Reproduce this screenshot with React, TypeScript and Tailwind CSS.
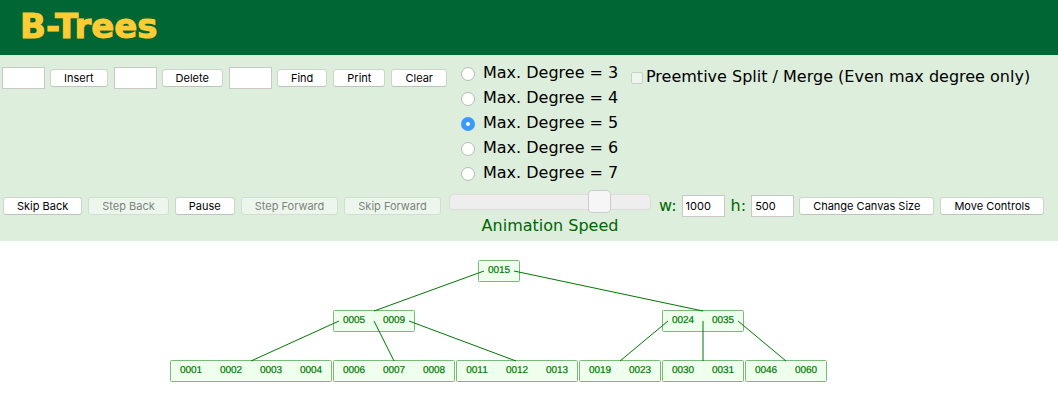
import { useState, type ButtonHTMLAttributes } from "react";

type TreeNode = { x: number; y: number; keys: string[] };
type Edge = [number, number, number, number];

const nodes: TreeNode[] = [
  { x: 478, y: 260, keys: ["0015"] },
  { x: 333, y: 310, keys: ["0005", "0009"] },
  { x: 662, y: 310, keys: ["0024", "0035"] },
  { x: 170, y: 360, keys: ["0001", "0002", "0003", "0004"] },
  { x: 333, y: 360, keys: ["0006", "0007", "0008"] },
  { x: 456, y: 360, keys: ["0011", "0012", "0013"] },
  { x: 579, y: 360, keys: ["0019", "0023"] },
  { x: 662, y: 360, keys: ["0030", "0031"] },
  { x: 745, y: 360, keys: ["0046", "0060"] },
];

const edges: Edge[] = [
  [484, 271, 374, 311],
  [514, 271, 703, 311],
  [339, 321, 251, 361],
  [374, 321, 394, 361],
  [409, 321, 516, 361],
  [668, 321, 620, 361],
  [703, 321, 703, 361],
  [738, 321, 786, 361],
];

function Button(props: ButtonHTMLAttributes<HTMLButtonElement>) {
  return (
    <button
      type="button"
      className="h-[18px] shrink-0 whitespace-nowrap rounded-[3px] border border-[#cbd6cb] border-b-[#bcc5bc] bg-white px-[13px] font-['Inter',sans-serif] text-[11px] leading-[15px] text-black disabled:border-[#cfe0cf] disabled:bg-[#edf6ed] disabled:text-[#7c847c]"
      {...props}
    />
  );
}

function Field({ id, label, value }: { id: string; label: string; value?: string }) {
  return (
    <input
      id={id}
      aria-label={label}
      defaultValue={value}
      className="h-[22px] w-[43px] shrink-0 border border-[#c8c8c8] bg-white px-[3px] font-['Inter',sans-serif] text-[11px] text-black outline-none"
    />
  );
}

function Tree() {
  return (
    <svg
      role="img"
      aria-label="B-Tree"
      className="block h-[176px] w-[1058px]"
      viewBox="0 241 1058 176"
    >
      <g transform="translate(0.5 0.5)" fill="#eeffee" stroke="#7ab97a">
        {nodes.map((n) => (
          <rect key={n.keys[0]} x={n.x} y={n.y} width={n.keys.length * 40 + 1} height={21} rx={1} />
        ))}
      </g>
      <g stroke="#007700" strokeWidth={1}>
        {edges.map(([x1, y1, x2, y2]) => (
          <line key={`${x1}-${x2}`} x1={x1} y1={y1} x2={x2} y2={y2} />
        ))}
      </g>
      <g
        className="font-['Liberation_Sans',sans-serif] text-[10px]"
        fill="#007700"
        stroke="#007700"
        strokeWidth={0.2}
        textAnchor="middle"
        textRendering="geometricPrecision"
      >
        {nodes.flatMap((n) =>
          n.keys.map((k, i) => (
            <text key={k} x={n.x + 21 + i * 40} y={n.y + 13}>
              {k}
            </text>
          )),
        )}
      </g>
    </svg>
  );
}

export default function App() {
  const [degree, setDegree] = useState(5);
  return (
    <div className="min-h-screen overflow-x-hidden bg-white font-['DejaVu_Sans',sans-serif] text-base text-black">
      <header className="flex h-[55px] items-center bg-[#006633] px-5 pb-[3px]">
        <h1 className="text-[34px] font-bold leading-[52px] text-[#ffcc33] [-webkit-text-stroke:1px_#ffcc33]">
          B-Trees
        </h1>
      </header>

      <section className="bg-[#ddeedd] px-[2px] pt-[5px] pb-[2px]">
        <div className="flex items-start">
          <div className="mt-[7px] flex w-[459px] shrink-0 items-center gap-[6px]">
            <div className="flex items-center gap-[5px]">
              <Field id="insert" label="Value to insert" />
              <Button>Insert</Button>
            </div>
            <div className="flex items-center gap-[5px]">
              <Field id="delete" label="Value to delete" />
              <Button>Delete</Button>
            </div>
            <div className="flex items-center gap-[5px]">
              <Field id="find" label="Value to find" />
              <Button>Find</Button>
            </div>
            <Button>Print</Button>
            <Button>Clear</Button>
          </div>
          <div role="radiogroup" aria-label="Max. Degree" className="w-[170px] shrink-0">
            {[3, 4, 5, 6, 7].map((d) => (
              <label key={d} className="flex h-[25px] items-center gap-2 whitespace-nowrap">
                <input
                  type="radio"
                  name="degree"
                  checked={degree === d}
                  onChange={() => setDegree(d)}
                  className="mt-[3px] size-[14px] shrink-0 appearance-none rounded-full border border-[#b4bcb4] bg-white checked:border-5 checked:border-[#3b99fc]"
                />
                Max. Degree = {d}
              </label>
            ))}
          </div>
          <label className="mt-1 flex h-[25px] items-center gap-[3px] whitespace-nowrap">
            <input
              type="checkbox"
              disabled
              className="mt-[2px] size-3 shrink-0 appearance-none rounded-[2px] border border-[#c5d2c5] bg-[#edf6ed]"
            />
            Preemtive Split / Merge (Even max degree only)
          </label>
        </div>

        <div className="flex items-start pt-[5px] text-[#006600]">
          <div className="mt-[7px] flex w-[447px] shrink-0 items-center gap-[6px] pl-px">
            <Button>Skip Back</Button>
            <Button disabled>Step Back</Button>
            <Button>Pause</Button>
            <Button disabled>Step Forward</Button>
            <Button disabled>Skip Forward</Button>
          </div>
          <div className="flex w-[202px] shrink-0 flex-col items-center">
            <input
              id="speed"
              type="range"
              defaultValue={78}
              className="h-[23px] w-full appearance-none bg-transparent [&::-webkit-slider-runnable-track]:h-4 [&::-webkit-slider-runnable-track]:rounded-[4px] [&::-webkit-slider-runnable-track]:border [&::-webkit-slider-runnable-track]:border-[#dddddd] [&::-webkit-slider-runnable-track]:bg-[#eeeeee] [&::-webkit-slider-thumb]:-mt-[5px] [&::-webkit-slider-thumb]:size-[23px] [&::-webkit-slider-thumb]:appearance-none [&::-webkit-slider-thumb]:rounded-[4px] [&::-webkit-slider-thumb]:border [&::-webkit-slider-thumb]:border-[#cccccc] [&::-webkit-slider-thumb]:bg-[#f6f6f6]"
            />
            <label htmlFor="speed" className="leading-[26px]">
              Animation Speed
            </label>
          </div>
          <div className="mt-[5px] ml-2 flex items-center gap-[6px]">
            <div className="flex items-center gap-[5px]">
              <label htmlFor="width" className="leading-[22px]">w:</label>
              <Field id="width" label="Canvas width" value="1000" />
            </div>
            <div className="flex items-center gap-[5px]">
              <label htmlFor="height" className="leading-[22px]">h:</label>
              <Field id="height" label="Canvas height" value="500" />
              <Button>Change Canvas Size</Button>
            </div>
            <Button>Move Controls</Button>
          </div>
        </div>
      </section>

      <main className="overflow-hidden">
        <Tree />
      </main>
    </div>
  );
}
